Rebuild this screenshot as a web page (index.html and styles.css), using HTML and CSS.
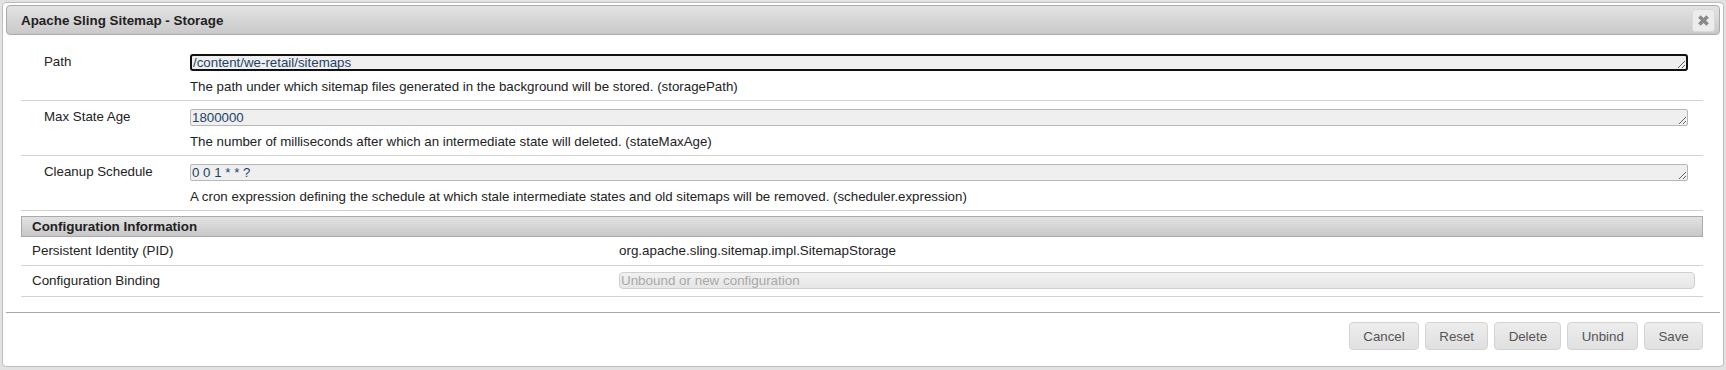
FILE: index.html
```html
<!DOCTYPE html>
<html lang="en">
<head>
    <meta charset="UTF-8">
    <meta name="viewport" content="width=device-width, initial-scale=1.0">
    <title>Apache Sling Sitemap - Storage</title>
    <link rel="stylesheet" href="styles.css">
</head>
<body>
    <div class="dialog">
        <div class="titlebar">
            <span class="title">Apache Sling Sitemap - Storage</span>
            <button class="close-btn" title="close">
                <svg width="13" height="13" viewBox="0 0 13 13">
                    <path d="M2.4 2.4 L10.6 10.6 M10.6 2.4 L2.4 10.6" stroke="#8a8a8a" stroke-width="3.6" fill="none"/>
                </svg>
            </button>
        </div>
        <div class="dialog-content">
            <div class="prop-row">
                <div class="prop-label">Path</div>
                <div class="prop-field">
                    <textarea class="prop-input focused" rows="1">/content/we-retail/sitemaps</textarea>
                    <div class="prop-desc">The path under which sitemap files generated in the background will be stored. (storagePath)</div>
                </div>
            </div>
            <div class="prop-row">
                <div class="prop-label">Max State Age</div>
                <div class="prop-field">
                    <textarea class="prop-input" rows="1">1800000</textarea>
                    <div class="prop-desc">The number of milliseconds after which an intermediate state will deleted. (stateMaxAge)</div>
                </div>
            </div>
            <div class="prop-row">
                <div class="prop-label">Cleanup Schedule</div>
                <div class="prop-field">
                    <textarea class="prop-input" rows="1">0 0 1 * * ?</textarea>
                    <div class="prop-desc">A cron expression defining the schedule at which stale intermediate states and old sitemaps will be removed. (scheduler.expression)</div>
                </div>
            </div>

            <div class="config-info">
                <div class="config-header">Configuration Information</div>
                <div class="config-row">
                    <div class="config-label">Persistent Identity (PID)</div>
                    <div class="config-value">org.apache.sling.sitemap.impl.SitemapStorage</div>
                </div>
                <div class="config-row binding-row">
                    <div class="config-label">Configuration Binding</div>
                    <div class="config-value">
                        <select class="binding" disabled>
                            <option>Unbound or new configuration</option>
                        </select>
                    </div>
                </div>
            </div>
        </div>
        <div class="buttonpane">
            <button class="btn">Cancel</button>
            <button class="btn">Reset</button>
            <button class="btn">Delete</button>
            <button class="btn">Unbind</button>
            <button class="btn">Save</button>
        </div>
    </div>
</body>
</html>
```

FILE: styles.css
```css
body {
    margin: 0;
    height: 370px;
    overflow: hidden;
    background-color: #e2e2e2;
    font-family: "Liberation Sans", Arial, sans-serif;
}

/* dialog sits over the dimmed console page */
.dialog {
    position: absolute;
    left: 2px;
    top: 2px;
    width: 1722px;
    box-sizing: border-box;
    padding: 2px 3px 3px;
    background-color: #fff;
    border: 1px solid #bdbdbd;
    border-radius: 4px;
}

.titlebar {
    display: flex;
    align-items: center;
    justify-content: space-between;
    height: 30px;
    box-sizing: border-box;
    padding: 0 4px 0 14px;
    border: 1px solid #aaa;
    border-radius: 4px;
    background: linear-gradient(#e3e3e3, #c9c9c9);
}

.title {
    font-size: 13.4px;
    font-weight: bold;
    color: #222;
}

.close-btn {
    display: flex;
    align-items: center;
    justify-content: center;
    width: 23px;
    height: 23px;
    padding: 0;
    border: 1px solid #d9d9d9;
    border-radius: 3px;
    background-color: #ececec;
}

.dialog-content {
    padding: 11px 17px 0 15px;
}

.prop-row {
    display: grid;
    grid-template-columns: 169px 1fr;
    padding: 8px 0 5px;
    border-bottom: 1px solid #d2d2d2;
    font-size: 13.3px;
    color: #222;
}

.prop-label {
    padding-left: 23px;
    line-height: 15px;
}

.prop-field {
    padding-right: 15px;
}

.prop-input {
    display: block;
    width: 100%;
    height: 17px;
    box-sizing: border-box;
    margin: 0;
    padding: 0 1px;
    overflow: hidden;
    border: 1px solid #b8b8b8;
    border-radius: 2px;
    background-color: #efefef;
    color: #1d4467;
    font-family: "Liberation Sans", Arial, sans-serif;
    font-size: 13.3px;
    line-height: 15px;
    outline: none;
}

.prop-input.focused {
    border: 2px solid #111;
    border-radius: 3px;
    line-height: 13px;
}

.prop-desc {
    margin-top: 8px;
    line-height: 16px;
}

.config-info {
    margin-top: 5px;
    font-size: 13.4px;
    color: #222;
}

.config-header {
    height: 21px;
    box-sizing: border-box;
    padding-left: 10px;
    border: 1px solid #aaa;
    background: linear-gradient(#e2e2e2, #c8c8c8);
    font-weight: bold;
    line-height: 19px;
}

.config-row {
    display: grid;
    grid-template-columns: 598px 1fr;
    padding: 6px 0 6px;
    border-bottom: 1px solid #d2d2d2;
    line-height: 16px;
}

.config-row.binding-row {
    padding: 6px 0 7px;
    line-height: 17px;
}

.config-label {
    padding-left: 11px;
}

.config-value {
    padding-right: 8px;
}

.binding {
    display: block;
    width: 100%;
    height: 17px;
    box-sizing: border-box;
    margin: 0;
    padding: 0 1px;
    -webkit-appearance: none;
    appearance: none;
    border: 1px solid #cfcfcf;
    border-radius: 4px;
    background: linear-gradient(#f1f1f1, #e6e6e6);
    color: #a8a8a8;
    font-family: inherit;
    font-size: 13.4px;
    line-height: 15px;
    opacity: 1;
}

.buttonpane {
    display: flex;
    justify-content: flex-end;
    gap: 6px;
    margin-top: 15px;
    padding: 9px 17px 13px;
    border-top: 1px solid #aaa;
}

.btn {
    height: 28px;
    padding: 0 13.3px;
    border: 1px solid #d3d3d3;
    border-radius: 4px;
    background: linear-gradient(#ededed, #e0e0e0);
    color: #555;
    font-family: "Liberation Sans", Arial, sans-serif;
    font-size: 13.3px;
    cursor: pointer;
}
```
